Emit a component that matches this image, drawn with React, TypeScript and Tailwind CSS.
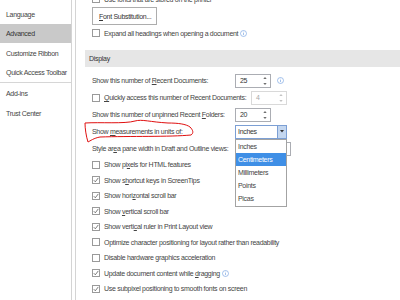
import React from "react";

const navItems = [
  { label: "Language", h: "h-[19px]" },
  { label: "Advanced", h: "h-[19px]", active: true },
  { label: "Customize Ribbon", h: "h-[20px]" },
  { label: "Quick Access Toolbar", h: "h-[19px]" },
];

const navItems2 = [
  { label: "Add-ins", h: "h-[20px]" },
  { label: "Trust Center", h: "h-[20px]" },
];

function Checkbox({ checked }: { checked?: boolean }) {
  return (
    <span className="w-[8px] h-[8px] shrink-0 mr-[4px] border border-[#9a9a9a] bg-white flex items-center justify-center">
      {checked && (
        <svg width="6" height="6" viewBox="0 0 6 6">
          <path d="M0.8 3.2 L2.3 4.8 L5.3 0.9" fill="none" stroke="#5a5a5a" strokeWidth="0.8" />
        </svg>
      )}
    </span>
  );
}

function Info() {
  return (
    <svg width="7" height="7" viewBox="0 0 7 7" className="shrink-0">
      <circle cx="3.5" cy="3.5" r="3" fill="none" stroke="#7ea8e4" strokeWidth="0.7" />
      <rect x="3.15" y="3" width="0.7" height="2.1" fill="#7ea8e4" />
      <rect x="3.15" y="1.7" width="0.7" height="0.7" fill="#7ea8e4" />
    </svg>
  );
}

function Spinner({ value, disabled }: { value: string; disabled?: boolean }) {
  const c = disabled ? "#c4c4c4" : "#6f6f6f";
  return (
    <div
      className={`w-[36px] h-[14px] shrink-0 border bg-white flex items-center pl-[4px] relative ${
        disabled ? "border-[#d9d9d9] text-[#a9a9a9]" : "border-[#abadb3] text-[#333]"
      }`}
    >
      <span>{value}</span>
      <svg width="4" height="10" viewBox="0 0 4 10" className="absolute right-[3px] top-[1px]">
        <path d="M0.3 3 L3.7 3 L2 1 Z" fill={c} />
        <path d="M0.3 7 L3.7 7 L2 9 Z" fill={c} />
      </svg>
    </div>
  );
}

const units = ["Inches", "Centimeters", "Millimeters", "Points", "Picas"];

function UnitsSelect() {
  return (
    <div className="relative w-[52px] h-[14px] shrink-0">
      <div className="w-full h-full border border-[#7c9fd4] bg-white flex items-center">
        <span className="pl-[2px] flex-1 text-[#333]">Inches</span>
        <span className="w-[9px] h-full bg-[#c4d7f0] border-l border-[#7c9fd4] flex items-center justify-center">
          <svg width="4" height="3" viewBox="0 0 4 3">
            <path d="M0 0 L4 0 L2 2.6 Z" fill="#333" />
          </svg>
        </span>
      </div>
      <ul className="absolute left-0 top-full w-[52px] h-[68px] bg-white border border-[#a3a3a3] z-10 flex flex-col">
        {units.map((u) => (
          <li
            key={u}
            className={`h-[13.2px] flex items-center pl-[2px] ${
              u === "Centimeters" ? "bg-[#3f8fe6] text-white" : "text-[#444]"
            }`}
          >
            {u}
          </li>
        ))}
      </ul>
    </div>
  );
}

const checks: { checked: boolean; label: React.ReactNode; info?: boolean }[] = [
  { checked: false, label: <>Show pi<u>x</u>els for HTML features</> },
  { checked: true, label: <>Show s<u>h</u>ortcut keys in ScreenTips</> },
  { checked: true, label: <>Show hori<u>z</u>ontal scroll bar</> },
  { checked: true, label: <>Show <u>v</u>ertical scroll bar</> },
  { checked: true, label: <>Show verti<u>c</u>al ruler in Print Layout view</> },
  { checked: false, label: <>Optimize character positioning for layout rather than readability</> },
  { checked: false, label: <>Disable hardware graphics acceleration</> },
  { checked: true, label: <>Update document content while <u>d</u>ragging</>, info: true },
  { checked: true, label: <>Use subpixel positioning to smooth fonts on screen</> },
];

export default function App() {
  return (
    <div className="w-[400px] h-[300px] overflow-hidden bg-white flex relative text-[7px] leading-none tracking-[-0.3px] text-[#444] font-['Liberation_Sans',Arial,sans-serif] [&_u]:underline-offset-[1px]">
      {/* Left nav */}
      <aside className="w-[72px] shrink-0 border-r border-[#d4d4d4] pt-[5px] flex flex-col">
        {navItems.map((n) => (
          <div
            key={n.label}
            className={`${n.h} flex items-center pl-[6px] whitespace-nowrap ${n.active ? "bg-[#c9c9c9] text-[#333]" : ""}`}
          >
            {n.label}
          </div>
        ))}
        <div className="h-px bg-[#d6d6d6]" />
        {navItems2.map((n) => (
          <div key={n.label} className={`${n.h} flex items-center pl-[6px] whitespace-nowrap`}>
            {n.label}
          </div>
        ))}
      </aside>

      {/* Options panel */}
      <main className="ml-[3px] flex-1 border-l border-[#d4d4d4] pl-[9px] flex flex-col whitespace-nowrap">
        <div className="h-[14px] mt-[-8px] pl-[7px] flex items-center">
          <Checkbox />
          <span>Use fonts that are stored on the printer</span>
        </div>
        <div className="mt-[1px] pl-[7px]">
          <button className="w-[65px] h-[18px] border border-[#adadad] bg-white text-left pl-[6px] text-[#333]">
            <u>F</u>ont Substitution...
          </button>
        </div>
        <div className="h-[14px] mt-[1px] pl-[7px] flex items-center gap-[2px]">
          <span className="flex items-center">
            <Checkbox />
            <span>Expand all headings when opening a document</span>
          </span>
          <Info />
        </div>

        <div className="h-[17px] mt-[10px] bg-[#e6e6e6] flex items-center pl-[4px] text-[#333]">Display</div>

        <div className="mt-[5px] h-[17px] pl-[7px] flex items-center">
          <span className="w-[143px]">
            Show this number of <u>R</u>ecent Documents:
          </span>
          <Spinner value="25" />
          <span className="ml-[6px]">
            <Info />
          </span>
        </div>
        <div className="h-[17px] pl-[7px] flex items-center">
          <Checkbox />
          <span className="w-[147px]">
            <u>Q</u>uickly access this number of Recent Documents:
          </span>
          <Spinner value="4" disabled />
        </div>
        <div className="h-[17px] pl-[7px] flex items-center">
          <span className="w-[143px]">
            Show this number of unpinned Recent <u>F</u>olders:
          </span>
          <Spinner value="20" />
        </div>
        <div className="h-[17px] pl-[7px] flex items-center">
          <span className="w-[143px]">
            Show <u>m</u>easurements in units of:
          </span>
          <UnitsSelect />
        </div>
        <div className="h-[17px] pl-[7px] flex items-center">
          <span className="w-[143px]">
            Style ar<u>e</u>a pane width in Draft and Outline views:
          </span>
          <div className="w-[56px] h-[14px] border border-[#abadb3] bg-white" />
        </div>

        {checks.map((c, i) => (
          <div key={i} className="h-[15.5px] pl-[7px] flex items-center gap-[2px]">
            <span className="flex items-center">
              <Checkbox checked={c.checked} />
              <span>{c.label}</span>
            </span>
            {c.info && <Info />}
          </div>
        ))}
      </main>

      {/* hand-drawn red annotation */}
      <svg className="absolute inset-0 pointer-events-none z-20" width="400" height="300" viewBox="0 0 400 300">
        <path
          d="M85 123 C100 122 125 124 135 121 C142 119 150 122 168 123 C178 123 186 124 190 127 C193 130 194 133 191 135 C170 137 130 136 100 137 C94 138 90 141 88 142 C86 136 85 128 85 123 Z"
          fill="none"
          stroke="#e01010"
          strokeWidth="1"
        />
      </svg>
    </div>
  );
}
